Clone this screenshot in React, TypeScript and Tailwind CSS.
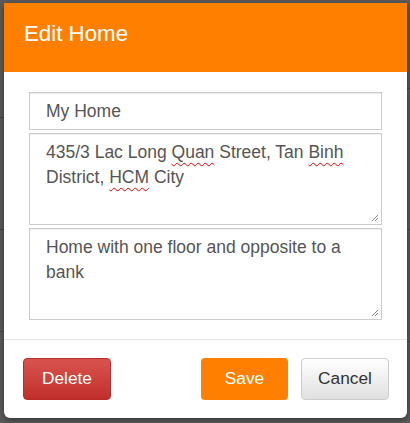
import React from "react"

const font = { fontFamily: '"Liberation Sans", Arial, sans-serif' }

function Squiggle({ children }: { children: React.ReactNode }) {
  return (
    <span className="underline decoration-wavy decoration-[#e00] decoration-1 underline-offset-[4px]">
      {children}
    </span>
  )
}

function Grip() {
  return (
    <svg className="absolute right-[2px] bottom-[2px]" width="8" height="8" viewBox="0 0 8 8">
      <path d="M7 1 L1 7 M7 4 L4 7" stroke="#888" strokeWidth="1" />
    </svg>
  )
}

export default function App() {
  return (
    <div className="relative w-[410px] h-[423px] bg-[#5b5b5b] overflow-hidden" style={font}>
      {/* faint rows of the page behind the overlay */}
      <div className="absolute left-0 top-[117px] w-[6px] h-px bg-[#4a4440]" />
      <div className="absolute left-0 top-[229px] w-[6px] h-px bg-[#4a4440]" />
      <div className="absolute left-0 top-[331px] w-[6px] h-px bg-[#4a4440]" />
      <div className="absolute right-0 top-[88px] w-[6px] h-px bg-[#4a4440]" />
      <div className="absolute right-0 top-[229px] w-[6px] h-px bg-[#4a4440]" />
      <div className="absolute right-0 top-[341px] w-[6px] h-px bg-[#4a4440]" />

      <div className="absolute left-[4px] top-[3px] w-[403px] h-[415px] bg-white rounded-b-[6px] shadow-[0_2px_6px_rgba(0,0,0,0.45)] flex flex-col">
        <div className="h-[69px] bg-[#ff8000] flex items-center px-[20px] shrink-0">
          <h1 className="text-white text-[22.3px] leading-none pb-[6px]">Edit Home</h1>
        </div>

        <div className="px-[25px] pt-[20px] pb-[19px] flex flex-col gap-[3px] text-[#555] text-[17.5px] border-b border-[#e5e5e5]">
          <div className="h-[38px] border border-[#ccc] shadow-[inset_0_1px_1px_rgba(0,0,0,0.075)] flex items-center pl-[16px]">
            My Home
          </div>
          <div className="relative h-[92px] border border-[#ccc] shadow-[inset_0_1px_1px_rgba(0,0,0,0.075)] pl-[16px] pr-[8px] pt-[6px] leading-[25px]">
            435/3 Lac Long <Squiggle>Quan</Squiggle> Street, Tan <Squiggle>Binh</Squiggle>
            <br />
            District, <Squiggle>HCM</Squiggle> City
            <Grip />
          </div>
          <div className="relative h-[92px] border border-[#ccc] shadow-[inset_0_1px_1px_rgba(0,0,0,0.075)] pl-[16px] pr-[8px] pt-[6px] leading-[25px]">
            Home with one floor and opposite to a
            <br />
            bank
            <Grip />
          </div>
        </div>

        <div className="flex-1 flex items-center pl-[19px] pr-[18px] text-[17.3px]">
          <button className="w-[88px] h-[42px] rounded-[4px] text-white border border-[#b92c28] bg-linear-to-b from-[#d9534f] to-[#c12e2a]">
            Delete
          </button>
          <div className="flex-1" />
          <button className="w-[87px] h-[42px] rounded-[4px] text-white bg-[#ff8000]">Save</button>
          <button className="ml-[13px] w-[88px] h-[42px] rounded-[4px] text-[#333] border border-[#ccc] bg-linear-to-b from-white to-[#e0e0e0]">
            Cancel
          </button>
        </div>
      </div>
    </div>
  )
}
